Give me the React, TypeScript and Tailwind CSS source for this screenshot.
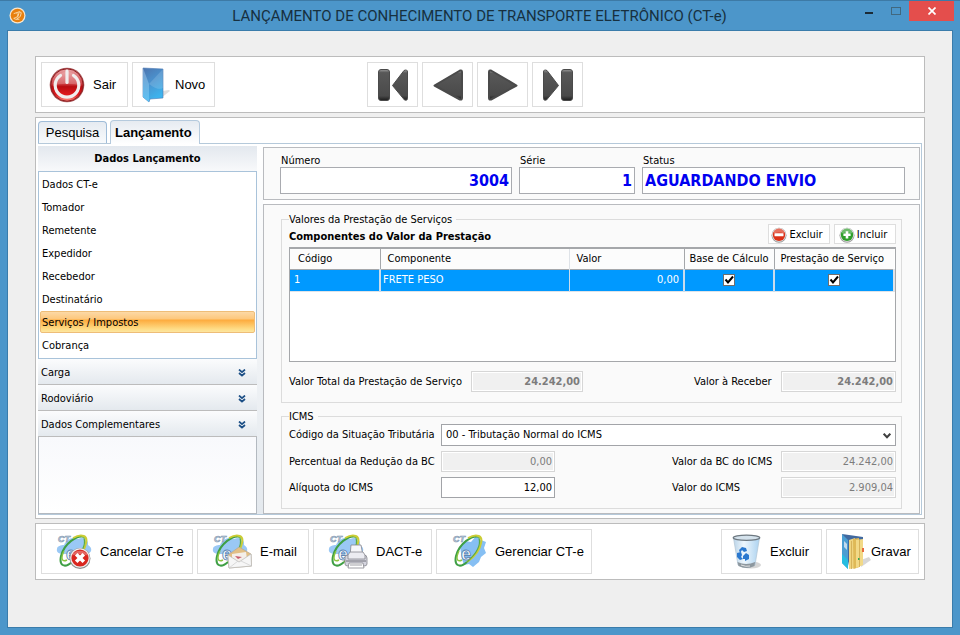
import { useState } from "react";
import type { ReactNode } from "react";

const sections = [
  "Dados CT-e",
  "Tomador",
  "Remetente",
  "Expedidor",
  "Recebedor",
  "Destinatário",
  "Serviços / Impostos",
  "Cobrança",
];

const groups = ["Carga", "Rodoviário", "Dados Complementares"];

/* ---------- icons ---------- */

function AppIcon() {
  return (
    <svg viewBox="0 0 18 18" className="size-[17px]" aria-hidden="true">
      <circle cx="9" cy="9" r="8.5" fill="#f6e6cf" />
      <circle cx="9" cy="9" r="7.2" fill="#e8800f" />
      <path d="M5 7l6-2 2 1-1 4-4 3M8 7l2 1-2 3-3 1 2 1 4 0M11 5l-2 6" fill="none" stroke="#f9dcae" strokeWidth="1" />
    </svg>
  );
}

function PowerIcon() {
  return (
    <svg viewBox="0 0 36 36" className="size-9" aria-hidden="true">
      <defs>
        <linearGradient id="pw" x1="0" y1="0" x2="0" y2="1">
          <stop offset="0" stopColor="#e9a3a5" />
          <stop offset=".45" stopColor="#d0474b" />
          <stop offset=".55" stopColor="#b90d12" />
          <stop offset=".8" stopColor="#e0191d" />
          <stop offset="1" stopColor="#ff8b80" />
        </linearGradient>
      </defs>
      <circle cx="18" cy="18" r="17.3" fill="#a8585a" />
      <circle cx="18" cy="18" r="16.2" fill="url(#pw)" stroke="#8e1c1f" strokeWidth="1" />
      <path d="M4 19c7-3 21-3 28 0a14 14 0 0 0-28 0" fill="#fff" opacity=".18" />
      <path d="M11.500 8.500a11.800 11.800 0 1 0 13 0" fill="none" stroke="#f1eeee" strokeWidth="3.200" strokeLinecap="round" />
      <path d="M18 4v11.500" stroke="#f1eeee" strokeWidth="3.200" strokeLinecap="round" />
    </svg>
  );
}

function FolderIcon() {
  return (
    <svg viewBox="0 0 30 36" className="h-9 w-[30px]" aria-hidden="true">
      <defs>
        <linearGradient id="fo" x1="0" y1="0" x2=".4" y2="1">
          <stop offset="0" stopColor="#4d74ae" />
          <stop offset=".5" stopColor="#4a93cf" />
          <stop offset="1" stopColor="#3cb4ee" />
        </linearGradient>
        <linearGradient id="fb" x1="0" y1="0" x2="0" y2="1">
          <stop offset="0" stopColor="#7d9dcb" />
          <stop offset="1" stopColor="#5cc3f5" />
        </linearGradient>
      </defs>
      <path d="M20 31l9-7-1-1-7 1z" fill="#cfcfcf" opacity=".7" />
      <path d="M2 1l20 1v29l-13 1-1 3-6-5z" fill="url(#fo)" stroke="#4a79b4" strokeWidth=".6" />
      <path d="M2 1l6 16v18l-6-5z" fill="url(#fb)" />
      <path d="M8 17L22 2v19C16 24 10 18 8 17z" fill="#fff" opacity=".14" />
    </svg>
  );
}

function NavIcon({ kind }: { kind: "first" | "prev" | "next" | "last" }) {
  const flip = kind === "next" || kind === "last";
  const edge = kind === "first" || kind === "last";
  return (
    <svg viewBox="0 0 34 34" className="size-[34px]" aria-hidden="true">
      <defs>
        <linearGradient id="nv" x1="0" y1="0" x2="0" y2="1">
          <stop offset="0" stopColor="#9a9a9a" />
          <stop offset=".1" stopColor="#585858" />
          <stop offset=".85" stopColor="#4a4a4a" />
          <stop offset="1" stopColor="#1c1c1c" />
        </linearGradient>
      </defs>
      <g transform={flip ? "translate(34 0) scale(-1 1)" : undefined} fill="url(#nv)" stroke="#4a4a4a" strokeLinejoin="round">
        {edge ? (
          <>
            <rect x="2.500" y="1.500" width="11" height="31" rx="2.500" />
            <path d="M16.500 17.500L28 2.500q3.500-1.500 3.500 1.500v26.500q0 2.500-3 1.500z" strokeWidth="1" />
          </>
        ) : (
          <path d="M3.500 17.500L29 2.500q2-.5 2 1.500v26q0 2-2 1.500z" strokeWidth="2" />
        )}
      </g>
    </svg>
  );
}

function RoundIcon({ plus }: { plus?: boolean }) {
  return (
    <svg viewBox="0 0 16 16" className="size-4 shrink-0" aria-hidden="true">
      <circle cx="8" cy="8.300" r="7.500" fill="#9c9c9c" />
      <circle cx="8" cy="7.800" r="7" fill="#e4e4e4" />
      <circle cx="8" cy="7.800" r="6.200" fill={plus ? "#2f9e2b" : "#dc3218"} />
      <path d="M2.500 6.500a5.500 5 0 0 1 11 0q-5.500-2-11 0" fill="#fff" opacity=".3" />
      {plus ? (
        <path d="M8 4.200v7.200M4.400 7.800h7.200" stroke="#fff" strokeWidth="2.600" />
      ) : (
        <rect x="3.500" y="6.300" width="9" height="3" rx=".5" fill="#fff" />
      )}
    </svg>
  );
}

function CteIcon({ kind }: { kind: "cancel" | "mail" | "print" | "manage" }) {
  return (
    <svg viewBox="0 0 40 36" className="h-9 w-10 shrink-0" aria-hidden="true">
      {kind === "manage" ? (
        <path d="M9 13l5-6 6 1 5-6 5 4 5 2-2 6 2 5-5 4-2 5-6 5-4-3-5 1-2-6z" fill="#86bff3" />
      ) : (
        <path d="M1 15c0-3 4-4 7-4 3-6 10-9 14-6 6-3 11 1 10 6 5 3 4 8-1 9H8c-5 0-8-2-7-5" fill="#9ac8f5" />
      )}
      <g fill="none">
        <path d="M29 3C21 0 8 10 5 22c-2 9 3 13 11 6" stroke="#3f9f45" strokeWidth="2" />
        <path d="M17 4c9-5 15-2 13 5-1 7-6 13-14 19" stroke="#cbcd35" strokeWidth="2" />
        <path d="M28 4c2 7-3 16-12 24" stroke="#5aab45" strokeWidth="1.200" />
        <path d="M8 17c-3 6-3 12 3 9" stroke="#8cc63f" strokeWidth="1.400" />
      </g>
      <text x="2" y="8" fontSize="9" fontWeight="700" fontStyle="italic" fill="#c6d4e2" stroke="#7b93ae" strokeWidth=".6" className="font-['Liberation_Sans',sans-serif]">
        CT
      </text>
      <text x="10" y="26" fontSize="18" fontWeight="700" fill="#fff" stroke="#5d86b4" strokeWidth=".9" className="font-['Liberation_Sans',sans-serif]">
        e
      </text>
      {kind === "cancel" && (
        <g>
          <circle cx="24" cy="24.500" r="10.500" fill="#8d8d8d" />
          <circle cx="24" cy="24" r="9.800" fill="#eee" />
          <circle cx="24" cy="24" r="8.600" fill="#d9261f" />
          <path d="M16 21.500a8.500 7 0 0 1 16 0q-8-3-16 0" fill="#fff" opacity=".3" />
          <path d="M20.200 20.200l7.600 7.600M27.800 20.200l-7.600 7.600" stroke="#fff" strokeWidth="3.600" />
        </g>
      )}
      {kind === "mail" && (
        <g stroke="#b5a894" strokeWidth=".7" strokeLinejoin="round">
          <path d="M16 21l11-8 12 7 .500 12L17 34z" fill="#e2bf85" />
          <path d="M20 20l14-2 1 7-8 4-7-4z" fill="#f4efe9" stroke="none" />
          <path d="M23 22l7 1-4 2z" fill="#c85b6b" stroke="none" />
          <path d="M16 21l11 7 12-8 .500 12L17 34z" fill="#f6f6f6" stroke="#b9b9b9" />
          <path d="M17 34l9-7M39.500 32L29 27" stroke="#ccc" />
        </g>
      )}
      {kind === "print" && (
        <g stroke="#85858d" strokeWidth=".8" strokeLinejoin="round">
          <path d="M22 22l1-11h10l2 11z" fill="#f6f6fa" />
          <path d="M17 23q0-2 3-2h16q3 0 3 3v6q0 2-3 2H20q-3 0-3-2z" fill="#d4d4de" />
          <path d="M20 21l2-3h13l2 3v4H20z" fill="#ececf2" />
          <path d="M18 27h20" stroke="#55555e" />
          <path d="M21 29h14l1 5H20z" fill="#fff" />
          <path d="M22 31h12" />
        </g>
      )}
    </svg>
  );
}

function BinIcon() {
  return (
    <svg viewBox="0 0 30 36" className="h-9 w-[30px] shrink-0" aria-hidden="true">
      <defs>
        <linearGradient id="bn" x1="0" y1="0" x2="1" y2="0">
          <stop offset="0" stopColor="#b9d3e8" />
          <stop offset=".4" stopColor="#eef7fd" />
          <stop offset="1" stopColor="#acd2f0" />
        </linearGradient>
      </defs>
      <ellipse cx="19" cy="31" rx="10" ry="3.500" fill="#d5d5d5" />
      <path d="M1.500 4L6 31q8 5 17 0L27.500 4z" fill="url(#bn)" stroke="#b2c4d2" strokeWidth=".7" />
      <path d="M5.500 28l1 4q8 4 16 0l.6-4q-9 4-17.600 0" fill="#8d979e" />
      <path d="M9 31q5 2 9 1" stroke="#e2e2e2" fill="none" />
      <ellipse cx="14.500" cy="3.800" rx="13.300" ry="2.600" fill="#d4e2ec" stroke="#6d7880" strokeWidth="1.200" />
      <g fill="#2a78cf">
        <path d="M7 16l3-3 4 1 1 3-3 1-2-2-2 3z" />
        <path d="M5 19l4-1 1 3-1 2 2 2-3 1-3-3z" />
        <path d="M11 22l3-3 3 2 0 4-4 2v-2l-2 0z" />
      </g>
    </svg>
  );
}

function SaveIcon() {
  return (
    <svg viewBox="0 0 30 38" className="h-[38px] w-[30px] shrink-0" aria-hidden="true">
      <path d="M20 34l10-7-2-3-8 3z" fill="#cdcdcd" opacity=".8" />
      <path d="M1 1l21 3v25L8 33z" fill="#41699f" />
      <path d="M8 7l6-2 1 30-7 1z" fill="#efd47f" />
      <path d="M12 6l6-1 .5 29-6 2z" fill="#dfb957" />
      <path d="M15 7l7-1v26l-7 3z" fill="#f2d987" />
      <path d="M18.500 7v27M10.500 8v28" stroke="#cfaa50" strokeWidth=".8" />
      <path d="M1 1l6 6v29l-6-6z" fill="#4b9ed2" />
      <path d="M1 21l6 6v9l-6-6z" fill="#27bde0" />
      <path d="M3 8l3 3v6l-3-3z" fill="#c3dbee" />
      <path d="M21 15h2v4h-2z" fill="#e76b40" />
      <path d="M17 25h1.500v2H17z" fill="#34a853" />
    </svg>
  );
}

function DoubleChevron() {
  return (
    <svg viewBox="0 0 8 8" className="size-2" fill="none" stroke="#1c4f86" strokeWidth="1.700" aria-hidden="true">
      <path d="M1 .5l3 2.700 3-2.700M1 4l3 2.700L7 4" />
    </svg>
  );
}

/* ---------- building blocks ---------- */

function ToolButton({ icon, label, className }: { icon: ReactNode; label: string; className: string }) {
  return (
    <button
      type="button"
      className={`flex h-[45px] items-center border border-[#dedede] bg-white font-['Liberation_Sans',Arial,sans-serif] text-[13px] leading-4 whitespace-nowrap ${className}`}
    >
      {icon}
      {label}
    </button>
  );
}

function NavButton({ kind, label }: { kind: "first" | "prev" | "next" | "last"; label: string }) {
  return (
    <button type="button" aria-label={label} className="flex h-[45px] w-[51px] items-center justify-center border border-[#dedede] bg-white">
      <NavIcon kind={kind} />
    </button>
  );
}

function SmallButton({ plus, label }: { plus?: boolean; label: string }) {
  return (
    <button type="button" className="flex h-5 w-[62px] items-center justify-center gap-0.5 border border-[#dedede] bg-white pt-px pr-1">
      <RoundIcon plus={plus} />
      {label}
    </button>
  );
}

function HeadField({ id, label, value, className, inputClass }: { id: string; label: string; value: string; className: string; inputClass: string }) {
  return (
    <div className={`flex flex-col ${className}`}>
      <label htmlFor={id} className="px-px leading-[13px]">
        {label}
      </label>
      <input
        id={id}
        defaultValue={value}
        className={`h-[27px] w-full border border-[#a9abb0] bg-white px-0.5 text-[16px] font-bold text-[#0000f0] outline-none ${inputClass}`}
      />
    </div>
  );
}

function Amount({ id, value, bold, editable }: { id: string; value: string; bold?: boolean; editable?: boolean }) {
  return (
    <input
      id={id}
      defaultValue={value}
      readOnly={!editable}
      className={`h-[21px] w-full min-w-0 border px-0.5 text-right text-[11px] outline-none ${
        editable ? "border-[#a2a4a8] bg-white text-black" : "border-[#d6d6d6] bg-[#f0f0f0] text-[#7c7c7c] ring-1 ring-white ring-inset"
      } ${bold ? "font-bold" : ""}`}
    />
  );
}

function Check({ label }: { label: string }) {
  const [on, setOn] = useState(true);
  return (
    <span className="relative mx-auto block size-3">
      <input
        type="checkbox"
        aria-label={label}
        checked={on}
        onChange={() => setOn(!on)}
        className="block size-3 appearance-none border border-[#6e6e6e] bg-white"
      />
      {on && (
        <svg viewBox="0 0 12 12" className="pointer-events-none absolute inset-0 size-3" aria-hidden="true">
          <path d="M2.500 5.500l2.500 3 5-6" fill="none" stroke="#000" strokeWidth="2" />
        </svg>
      )}
    </span>
  );
}

/* ---------- window regions ---------- */

function TitleBar() {
  return (
    <header className="flex h-[30px] items-start border-t border-[#3d7aa6] pr-[6px]">
      <div className="flex w-[146px] items-center pt-1.5 pl-[9px]">
        <AppIcon />
      </div>
      <h1 className="flex-1 pt-[5px] text-center font-[Roboto,'Noto_Sans',sans-serif] text-[15px] leading-5 whitespace-nowrap text-[#17303f]">
        LANÇAMENTO DE CONHECIMENTO DE TRANSPORTE ELETRÔNICO (CT-e)
      </h1>
      <div className="flex w-[141px] justify-end">
        <button type="button" aria-label="Minimizar" className="flex h-5 w-[27px] items-center justify-center">
          <span className="mt-1 h-[2px] w-2 bg-[#1b2b36]" />
        </button>
        <button type="button" aria-label="Maximizar" className="flex h-5 w-[27px] items-center justify-center">
          <span className="h-2 w-2.5 border border-[#41687f]" />
        </button>
        <button type="button" aria-label="Fechar" className="flex h-5 w-[45px] items-center justify-center bg-[#e44e4c]">
          <svg viewBox="0 0 8 8" className="size-2" aria-hidden="true">
            <path d="M.5 .5l7 7M7.500 .5l-7 7" stroke="#fff" strokeWidth="1.700" />
          </svg>
        </button>
      </div>
    </header>
  );
}

function Sidebar() {
  const [active, setActive] = useState("Serviços / Impostos");
  return (
    <aside className="flex w-[219px] shrink-0 flex-col">
      <h2 className="h-[25px] bg-linear-to-b from-[#e3e8ee] to-[#f8f9fb] text-center leading-[26px] font-bold">Dados Lançamento</h2>
      <nav className="flex flex-col border border-[#a9c3da] bg-white p-px">
        {sections.map((s) => (
          <button
            key={s}
            type="button"
            onClick={() => setActive(s)}
            className={`mb-px h-[22px] border px-px pt-0.5 text-left ${
              s === active
                ? "rounded-xs border-[#eebd78] bg-[linear-gradient(to_bottom,#fcd9a6_0%,#fdc77c_35%,#fdab3d_40%,#fedc86_85%,#fde6a0_100%)]"
                : "border-transparent"
            }`}
          >
            {s}
          </button>
        ))}
      </nav>
      {groups.map((g) => (
        <button
          key={g}
          type="button"
          className="flex h-[26px] items-center justify-between border-b border-[#bcbcbc] bg-linear-to-b from-[#fbfcfd] to-[#e4e9ee] pt-0.5 pr-[11px] pl-[3px] text-left"
        >
          {g}
          <DoubleChevron />
        </button>
      ))}
      <div className="flex-1 border border-t-0 border-[#b3b9c0] bg-linear-to-b from-[#f8f9fc] to-white" />
    </aside>
  );
}

function ComponentTable() {
  return (
    <div className="mt-[3px] h-[115px] border border-t-2 border-[#a5a7aa] bg-white">
      <table className="w-full table-fixed border-collapse">
        <colgroup>
          <col className="w-[90px]" />
          <col />
          <col className="w-[115px]" />
          <col className="w-[90px]" />
          <col className="w-[120px]" />
        </colgroup>
        <thead>
          <tr className="h-5 border-b border-[#a5a7aa] bg-[#fcfcfc] text-left">
            <th className="border-r border-[#a5a7aa] px-2 font-normal">Código</th>
            <th className="border-r border-[#dfe3e8] px-[7px] font-normal">Componente</th>
            <th className="border-r border-[#a5a7aa] px-[7px] font-normal">Valor</th>
            <th className="border-r border-[#a5a7aa] px-0 text-center font-normal whitespace-nowrap">Base de Cálculo</th>
            <th className="pr-1 pl-0 text-center font-normal whitespace-nowrap">Prestação de Serviço</th>
          </tr>
        </thead>
        <tbody>
          <tr className="h-[22px] border-b border-[#dfe3e8] bg-[#0099ff] text-white">
            <td className="border-r-2 border-[#c9dced] px-1">1</td>
            <td className="border-r border-[#c9dced] px-0.5">FRETE PESO</td>
            <td className="border-r-2 border-[#c9dced] px-1 text-right">0,00</td>
            <td className="border-r-2 border-[#c9dced]">
              <Check label="Base de Cálculo" />
            </td>
            <td className="border-r-2 border-[#dfe3e8]">
              <Check label="Prestação de Serviço" />
            </td>
          </tr>
        </tbody>
      </table>
    </div>
  );
}

function ServiceValues() {
  return (
    <fieldset className="min-w-0 border border-[#dcdcdc] pr-[5px] pb-2.5 pl-[7px]">
      <legend className="h-2.5 pr-1 leading-3">Valores da Prestação de Serviços</legend>
      <div className="flex items-center gap-1">
        <h3 className="flex-1 pt-1.5 font-bold">Componentes do Valor da Prestação</h3>
        <SmallButton label="Excluir" />
        <SmallButton label="Incluir" plus />
      </div>
      <ComponentTable />
      <div className="mt-[9px] grid grid-cols-[182px_112px_1fr_87px_115px] items-center">
        <label htmlFor="total">Valor Total da Prestação de Serviço</label>
        <Amount id="total" value="24.242,00" bold />
        <span />
        <label htmlFor="receber">Valor à Receber</label>
        <Amount id="receber" value="24.242,00" bold />
      </div>
    </fieldset>
  );
}

function Icms() {
  return (
    <fieldset className="mt-2 min-w-0 border border-[#dcdcdc] pt-[3px] pr-[5px] pb-2.5 pl-[7px]">
      <legend className="h-2.5 pr-1 leading-3">ICMS</legend>
      <div className="grid grid-cols-[152px_114px_1fr_109px_115px] items-center gap-y-[5px]">
        <label htmlFor="cst">Código da Situação Tributária</label>
        <div className="relative col-span-4">
          <select id="cst" className="block h-[22px] w-full appearance-none border border-[#a2a4a8] bg-white px-1 text-[11px] outline-none">
            <option>00 - Tributação Normal do ICMS</option>
          </select>
          <svg viewBox="0 0 8 6" className="pointer-events-none absolute top-[9px] right-[5px] h-1.5 w-2" aria-hidden="true">
            <path d="M.7 .7L4 4.300 7.300 .7" fill="none" stroke="#3f3f3f" strokeWidth="2" />
          </svg>
        </div>
        <label htmlFor="reducao">Percentual da Redução da BC</label>
        <Amount id="reducao" value="0,00" />
        <span />
        <label htmlFor="bc">Valor da BC do ICMS</label>
        <Amount id="bc" value="24.242,00" />
        <label htmlFor="aliquota">Alíquota do ICMS</label>
        <Amount id="aliquota" value="12,00" editable />
        <span />
        <label htmlFor="vicms">Valor do ICMS</label>
        <Amount id="vicms" value="2.909,04" />
      </div>
    </fieldset>
  );
}

export default function App() {
  return (
    <div className="flex min-h-screen flex-col bg-[#4c96ca] font-['DejaVu_Sans_Condensed','DejaVu_Sans',Tahoma,sans-serif] text-[11px] leading-[14px] text-black">
      <TitleBar />
      <main className="mx-[7px] mb-[7px] flex flex-1 flex-col gap-1 border border-[#3a7cab] bg-[#efefef] px-[27px] pt-[25px] pb-10">
        <div className="flex border border-[#bcbcbc] bg-white p-[5px]">
          <div className="flex gap-1">
            <ToolButton icon={<PowerIcon />} label="Sair" className="w-[87px] gap-2 pl-[7px]" />
            <ToolButton icon={<FolderIcon />} label="Novo" className="w-[83px] gap-1 pl-2" />
          </div>
          <div className="ml-[152px] flex gap-1">
            <NavButton kind="first" label="Primeiro" />
            <NavButton kind="prev" label="Anterior" />
            <NavButton kind="next" label="Próximo" />
            <NavButton kind="last" label="Último" />
          </div>
        </div>

        <div className="border border-[#bcbcbc] bg-white px-0.5 pt-0.5 pb-[3px]">
          <div role="tablist" className="flex items-end gap-[3px] border-b border-[#b5c9da] font-['Liberation_Sans',Arial,sans-serif] text-[13px] leading-4">
            <button
              type="button"
              role="tab"
              aria-selected="false"
              className="h-[22px] w-[69px] rounded-t-sm border border-b-0 border-[#9fbcd8] bg-linear-to-b from-[#e6ebf1] to-[#f8fafc]"
            >
              Pesquisa
            </button>
            <button
              type="button"
              role="tab"
              aria-selected="true"
              className="-mb-px h-6 w-[90px] rounded-t-sm border border-b-0 border-[#b5cadd] bg-linear-to-b from-[#e6ebf1] to-white pl-1 text-left font-bold"
            >
              Lançamento
            </button>
          </div>
          <div className="flex border-r border-b border-[#b5c9da] bg-linear-to-b from-white to-[#e4e9ee] pt-0.5">
            <Sidebar />
            <div className="ml-[6px] flex min-w-0 flex-1 flex-col gap-1 bg-white pt-px pr-px">
              <div className="flex gap-[7px] border border-[#b9bbbf] bg-[#fafafa] pt-[6px] pr-[14px] pb-[5px] pl-4">
                <HeadField id="numero" label="Número" value="3004" className="w-[232px]" inputClass="text-right" />
                <HeadField id="serie" label="Série" value="1" className="w-[116px]" inputClass="text-right" />
                <HeadField id="status" label="Status" value="AGUARDANDO ENVIO" className="flex-1" inputClass="" />
              </div>
              <div className="border border-[#b9bbbf] bg-[#fafafa] pt-[9px] pr-[17px] pb-1 pl-[17px]">
                <ServiceValues />
                <Icms />
              </div>
            </div>
          </div>
        </div>

        <div className="flex justify-between border border-[#bcbcbc] bg-white p-[5px]">
          <div className="flex gap-1">
            <ToolButton icon={<CteIcon kind="cancel" />} label="Cancelar CT-e" className="w-[152px] gap-1 pl-3.5" />
            <ToolButton icon={<CteIcon kind="mail" />} label="E-mail" className="w-[112px] gap-2 pl-3.5" />
            <ToolButton icon={<CteIcon kind="print" />} label="DACT-e" className="w-[119px] gap-2 pl-3.5" />
            <ToolButton icon={<CteIcon kind="manage" />} label="Gerenciar CT-e" className="w-[156px] gap-1 pl-3.5" />
          </div>
          <div className="flex gap-1">
            <ToolButton icon={<BinIcon />} label="Excluir" className="w-[101px] gap-2 pl-2.5" />
            <ToolButton icon={<SaveIcon />} label="Gravar" className="w-[93px] pl-3.5" />
          </div>
        </div>
      </main>
    </div>
  );
}
